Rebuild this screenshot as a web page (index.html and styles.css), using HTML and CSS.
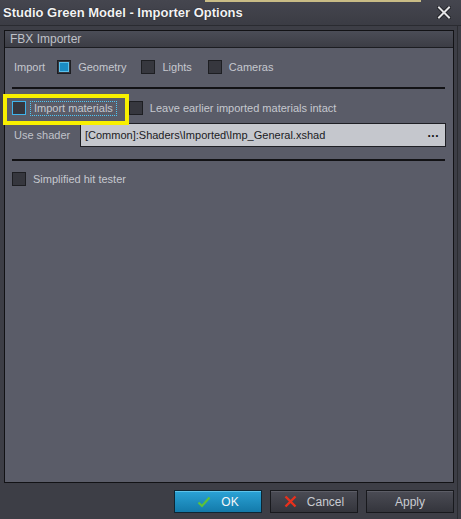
FILE: index.html
```html
<!DOCTYPE html>
<html>
<head>
<meta charset="utf-8">
<link rel="stylesheet" href="styles.css">
</head>
<body>
<div class="window">
  <div class="behind"></div>
  <div class="titlebar">
    <span class="title">Studio Green Model - Importer Options</span>
    <svg class="close" width="14" height="13" viewBox="0 0 14 13">
      <path d="M2 1.5 L12 11.5 M12 1.5 L2 11.5" stroke="#1c1d22" stroke-width="3.8" stroke-linecap="square"/>
      <path d="M2 1.5 L12 11.5 M12 1.5 L2 11.5" stroke="#e4e4e6" stroke-width="2" stroke-linecap="square"/>
    </svg>
  </div>
  <div class="content">
    <div class="group">
      <div class="group-header">FBX Importer</div>
      <div class="group-body">
        <div class="row row-import">
          <span class="label import-label">Import</span>
          <span class="check checked"><span class="mark"></span></span>
          <span class="ctext">Geometry</span>
          <span class="check gap-l"></span>
          <span class="ctext">Lights</span>
          <span class="check gap-c"></span>
          <span class="ctext">Cameras</span>
        </div>
        <div class="sep sep1"></div>
        <div class="row row-mat">
          <span class="check focus"></span>
          <span class="ctext focus-text">Import materials</span>
          <span class="check gap-leave"></span>
          <span class="ctext">Leave earlier imported materials intact</span>
        </div>
        <div class="row row-shader">
          <span class="label shader-label">Use shader</span>
          <div class="field">
            <span class="field-text">[Common]:Shaders\Imported\Imp_General.xshad</span>
            <span class="dots">...</span>
          </div>
        </div>
        <div class="sep sep2"></div>
        <div class="row row-simple">
          <span class="check"></span>
          <span class="ctext">Simplified hit tester</span>
        </div>
      </div>
    </div>
    <div class="buttons">
      <div class="btn btn-ok">
        <svg width="14" height="12" viewBox="0 0 14 12"><path d="M1.5 6.5 L5 10 L12.5 1.5" fill="none" stroke="#5cc23a" stroke-width="2.2"/></svg>
        <span>OK</span>
      </div>
      <div class="btn">
        <svg width="13" height="13" viewBox="0 0 13 13"><path d="M1.5 1.5 L11.5 11.5 M11.5 1.5 L1.5 11.5" stroke="#e8301c" stroke-width="2.4"/></svg>
        <span>Cancel</span>
      </div>
      <div class="btn">
        <span>Apply</span>
      </div>
    </div>
  </div>
  <div class="highlight"></div>
</div>
</body>
</html>
```

FILE: styles.css
```css
* { box-sizing: border-box; }
html, body { margin: 0; padding: 0; }
body {
  background: #3d3e46;
  font-family: "Liberation Sans", Arial, sans-serif;
  font-size: 11px;
  color: #c6c8cf;
}
.window {
  position: relative;
  width: 461px;
  height: 519px;
  background: #3d3e46;
  overflow: hidden;
}
.behind {
  position: absolute;
  left: 205px;
  top: 0;
  width: 216px;
  height: 2px;
  background: #c9bc86;
}
.titlebar {
  height: 26px;
  display: flex;
  align-items: center;
  justify-content: space-between;
  padding: 0 10px 1px 3px;
  background: linear-gradient(#45464f, #3b3c44);
  border-bottom: 1px solid #2a2b31;
}
.title {
  font-weight: bold;
  font-size: 13px;
  color: #f2f2f4;
  text-shadow: 0 0 1px #111;
}
.close { display: block; }
.content {
  height: 493px;
  padding: 4px 3px 0 4px;
  border-right: 1px solid #2b2c31;
  width: 458px;
}
.group {
  width: 450px;
  height: 453px;
  border: 1px solid #121215;
  background: #5a5c68;
  display: flex;
  flex-direction: column;
}
.group-header {
  height: 17px;
  line-height: 16px;
  padding-left: 5px;
  font-size: 12px;
  color: #bfc1c8;
  background: linear-gradient(#4b4d57, #3c3d45);
  border-bottom: 1px solid #1c1d22;
}
.group-body {
  padding: 12px 7px 0 7px;
}
.row {
  display: flex;
  align-items: center;
  height: 14px;
}
.label { color: #c4c6ce; }
.import-label { margin-left: 2px; }
.check {
  width: 14px;
  height: 14px;
  border: 1px solid #1d1e22;
  background: #36373e;
  flex: none;
  display: flex;
  align-items: center;
  justify-content: center;
}
.check.checked { margin-left: 12px; }
.check .mark {
  width: 10px;
  height: 10px;
  background: #1a8cc4;
  border: 1px solid #5cc0ea;
}
.ctext { margin-left: 7px; color: #c6c8cf; }
.gap-l { margin-left: 15px; }
.gap-c { margin-left: 16px; }
.sep {
  height: 2px;
  background: #121215;
  margin-right: 1px;
}
.sep1 { margin-top: 13px; }
.row-mat { margin-top: 12px; }
.check.focus { border-color: #3fb4ec; }
.focus-text {
  margin-left: 4px;
  padding: 1px 4px 2px 4px;
  outline: 1px dotted #4ec6f4;
  outline-offset: -1px;
}
.gap-leave { margin-left: 12px; }
.row-shader {
  height: 24px;
  margin-top: 8px;
}
.shader-label { width: 68px; flex: none; padding-left: 2px; color: #c0c2ca; }
.field {
  width: 366px;
  height: 24px;
  background: #c5c7cd;
  border: 1px solid #1e1f24;
  display: flex;
  align-items: center;
  justify-content: space-between;
  padding: 0 6px 0 4px;
}
.field-text { color: #1b1b1f; font-size: 11px; }
.dots { font-weight: bold; color: #111; font-size: 12px; margin-top: -5px; letter-spacing: 0.5px; }
.sep2 { margin-top: 12px; }
.row-simple { margin-top: 11px; }
.buttons {
  display: flex;
  justify-content: flex-end;
  gap: 8px;
  padding: 7px 0 0 0;
  width: 450px;
}
.btn {
  width: 88px;
  height: 23px;
  border: 1px solid #18191d;
  background: linear-gradient(#4b4c55, #34353c);
  box-shadow: inset 0 1px 0 #5c5d66;
  display: flex;
  align-items: center;
  justify-content: center;
  gap: 10px;
  font-size: 12px;
  color: #c9cbd1;
}
.btn-ok {
  background: linear-gradient(#2ba3d6, #137aaa);
  border-color: #0e2633;
  box-shadow: inset 0 1px 0 #5ec3ea;
  color: #f4f6f8;
}
.btn svg { display: block; }
.highlight {
  position: absolute;
  left: 3px;
  top: 94px;
  width: 126px;
  height: 31px;
  border: 4px solid #f8f000;
}
```
